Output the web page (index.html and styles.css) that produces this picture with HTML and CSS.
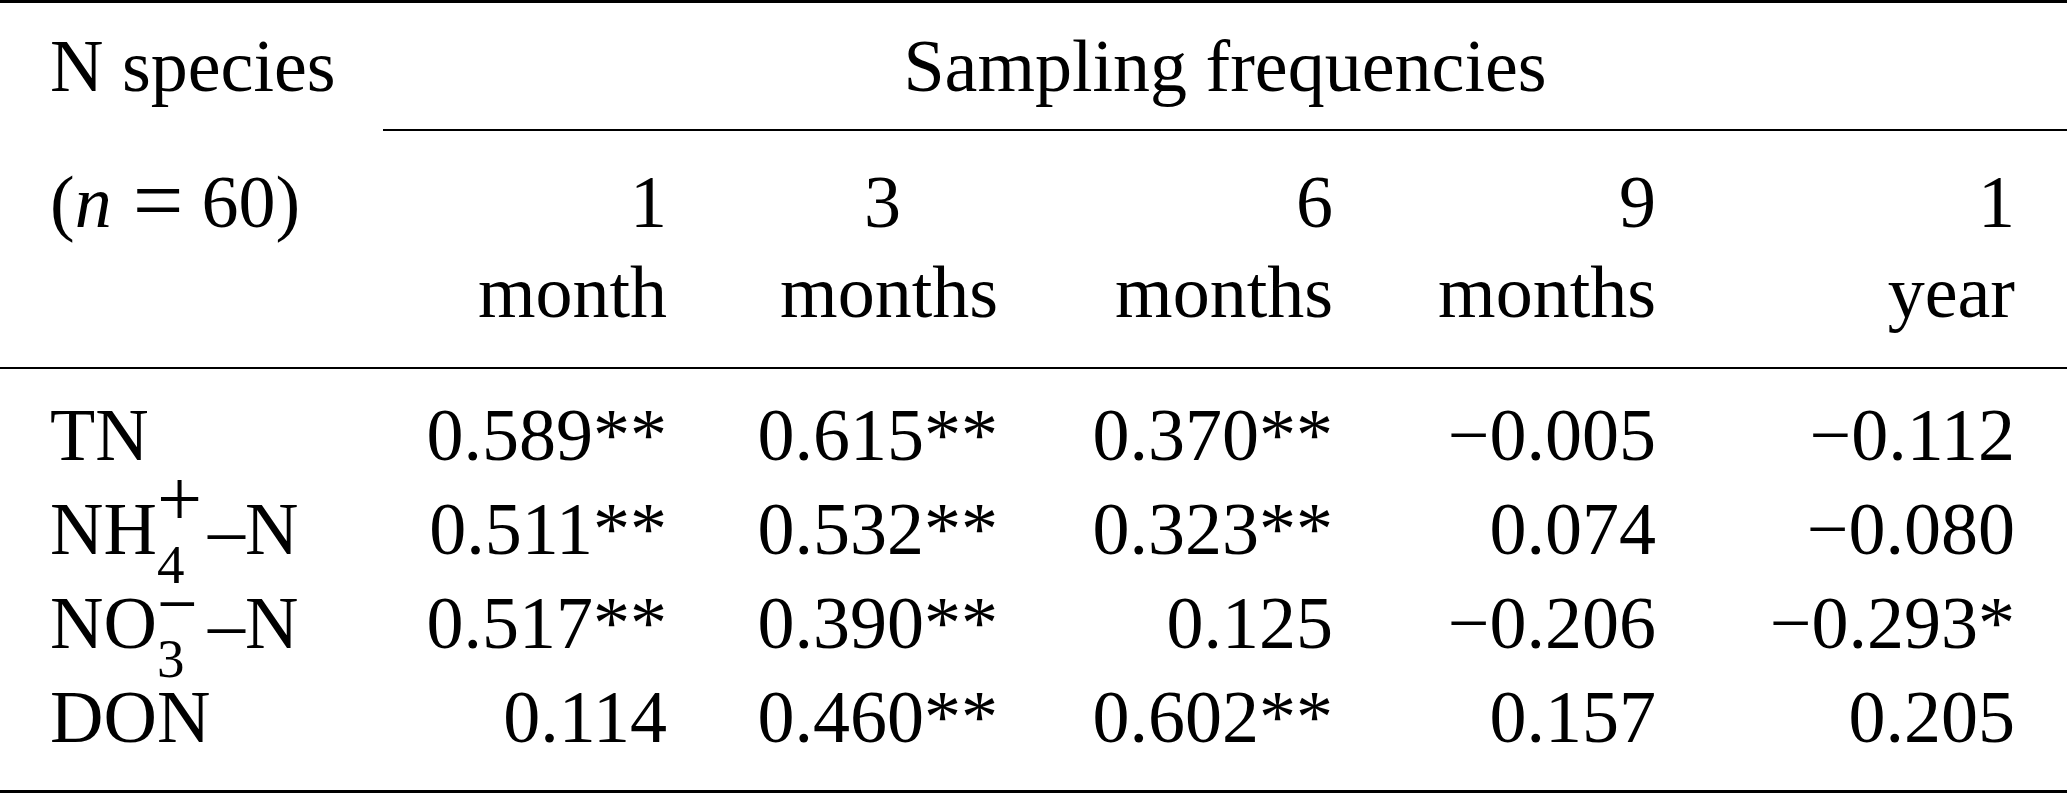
FILE: index.html
```html
<!DOCTYPE html>
<html lang="en">
<head>
<meta charset="utf-8">
<title>Sampling frequencies</title>
<link rel="stylesheet" href="styles.css">
</head>
<body>
<table class="tbl">
  <colgroup>
    <col class="c0"><col class="c1"><col class="c2"><col class="c3"><col class="c4"><col class="c5">
  </colgroup>
  <thead>
    <tr class="h1">
      <th class="lab">N species</th>
      <th class="group" colspan="5">Sampling frequencies</th>
    </tr>
    <tr class="h2">
      <th class="lab">(<i>n</i><span class="eq">=</span>60)</th>
      <th><div>1</div><div>month</div></th>
      <th><div class="centered">3</div><div>months</div></th>
      <th><div>6</div><div>months</div></th>
      <th><div>9</div><div>months</div></th>
      <th class="last"><div>1</div><div>year</div></th>
    </tr>
  </thead>
  <tbody>
    <tr>
      <th class="lab">TN</th>
      <td>0.589**</td>
      <td>0.615**</td>
      <td>0.370**</td>
      <td>−0.005</td>
      <td class="last">−0.112</td>
    </tr>
    <tr>
      <th class="lab">NH<span class="sub">4</span><span class="sup plus">+</span>–N</th>
      <td>0.511**</td>
      <td>0.532**</td>
      <td>0.323**</td>
      <td>0.074</td>
      <td class="last">−0.080</td>
    </tr>
    <tr>
      <th class="lab">NO<span class="sub">3</span><span class="sup minus">−</span>–N</th>
      <td>0.517**</td>
      <td>0.390**</td>
      <td>0.125</td>
      <td>−0.206</td>
      <td class="last">−0.293*</td>
    </tr>
    <tr>
      <th class="lab">DON</th>
      <td>0.114</td>
      <td>0.460**</td>
      <td>0.602**</td>
      <td>0.157</td>
      <td class="last">0.205</td>
    </tr>
  </tbody>
</table>
</body>
</html>
```
FILE: styles.css
```css
* { box-sizing: border-box; }
html, body { margin: 0; padding: 0; background: #fff; }
body {
  font-family: "Liberation Serif", "Times New Roman", serif;
  color: #000;
}
.tbl {
  width: 2067px;
  table-layout: fixed;
  border-collapse: separate;
  border-spacing: 0;
  border-top: 3px solid #000;
  font-size: 74px;
}
.c0 { width: 383px; }
.c1 { width: 284px; }
.c2 { width: 331px; }
.c3 { width: 335px; }
.c4 { width: 323px; }
.c5 { width: 411px; }

th, td {
  font-weight: normal;
  padding: 0;
  text-align: right;
  vertical-align: top;
  white-space: nowrap;
}
.lab { text-align: left; padding-left: 50px; }
.last { padding-right: 52px; }

.h1 th { line-height: 74px; padding-top: 26px; padding-bottom: 26px; }
.group { text-align: center; border-bottom: 2px solid #000; }

.h2 th {
  line-height: 90px;
  padding-top: 26px;
  padding-bottom: 30px;
  border-bottom: 2px solid #000;
}
.h2 th.lab { padding-left: 50px; }
.centered { text-align: center; padding-left: 100px; }
.eq {
  display: inline-block;
  font-size: 90px;
  line-height: 0;
  vertical-align: -4px;
  margin: 0 18px 0 21px;
}

tbody th, tbody td { line-height: 94px; }
tbody tr:first-child > * { padding-top: 19px; }
tbody tr:last-child > * { padding-bottom: 26px; border-bottom: 3px solid #000; }

.sub {
  display: inline-block;
  width: 0;
  font-size: 55px;
  line-height: 0;
  vertical-align: -29px;
}
.sup {
  display: inline-block;
  width: 51px;
  line-height: 0;
  text-align: left;
}
.plus { font-size: 80px; vertical-align: 28px; }
.minus { font-size: 72px; vertical-align: 20px; }
```
